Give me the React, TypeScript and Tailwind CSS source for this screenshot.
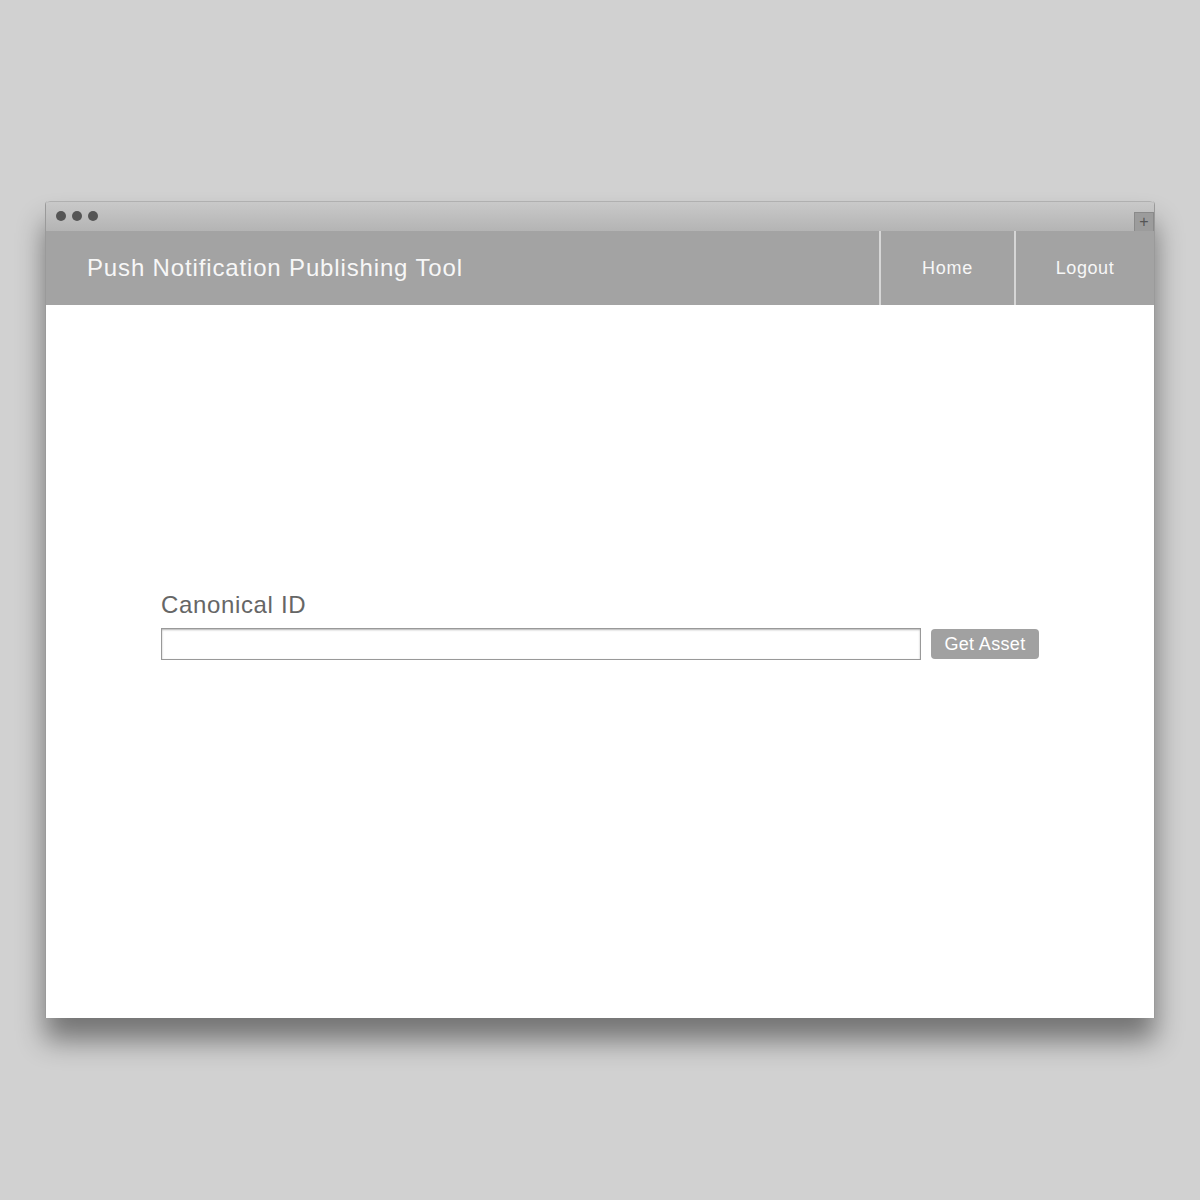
export default function App() {
  return (
    <div className="h-[1200px] w-[1200px] bg-[#d1d1d1] pt-[201px] pl-[45px] font-['Liberation_Sans',Arial,sans-serif]">
      <div className="w-[1110px] h-[817px] flex flex-col bg-white rounded-t-[4px] shadow-[0_22px_28px_rgba(0,0,0,0.45)] border-x border-[#9a9a9a]">
        {/* title bar */}
        <div className="h-[30px] flex items-start justify-between rounded-t-[4px] border-t border-[#b0b0b0] bg-gradient-to-b from-[#c9c9c9] to-[#b4b4b4]">
          <div className="flex gap-[6px] pl-[10px] pt-[9px]">
            <span className="w-[10px] h-[10px] rounded-full bg-[#555]" />
            <span className="w-[10px] h-[10px] rounded-full bg-[#555]" />
            <span className="w-[10px] h-[10px] rounded-full bg-[#555]" />
          </div>
          <div className="mt-[10px] w-[20px] h-[20px] bg-[#9c9c9c] border border-[#8a8a8a] flex items-center justify-center text-[#555] text-[16px] leading-none">
            +
          </div>
        </div>
        {/* nav */}
        <div className="h-[74px] bg-[#a3a3a3] flex items-stretch">
          <div className="flex-1 flex items-center pl-[41px] text-[24px] tracking-[0.85px] text-[#f7f7f7]">
            Push Notification Publishing Tool
          </div>
          <div className="w-[135px] border-l-2 border-[#d6d6d6] flex items-center justify-center text-[18px] tracking-[0.7px] text-[#f7f7f7]">
            Home
          </div>
          <div className="w-[140px] border-l-2 border-[#d6d6d6] flex items-center justify-center text-[18px] tracking-[0.6px] text-[#f7f7f7]">
            Logout
          </div>
        </div>
        {/* content */}
        <div className="flex-1 pt-[286px] pl-[115px]">
          <div className="text-[24px] leading-[28px] tracking-[0.65px] text-[#666]">Canonical ID</div>
          <div className="mt-[9px] flex items-center gap-[10px]">
            <input
              className="w-[760px] h-[32px] border border-[#999] shadow-[inset_0_1px_2px_rgba(0,0,0,0.3)] outline-none"
              type="text"
            />
            <button className="w-[108px] h-[30px] rounded-[4px] bg-[#a1a1a1] text-white text-[18px] tracking-[0.35px] leading-none">
              Get Asset
            </button>
          </div>
        </div>
      </div>
    </div>
  );
}
